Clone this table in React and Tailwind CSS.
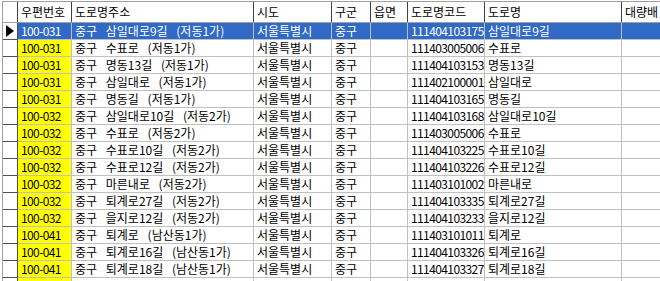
import React from "react";

const rows = [
  ["100-031", "중구 삼일대로9길 (저동1가)", "서울특별시", "중구", "", "111404103175", "삼일대로9길"],
  ["100-031", "중구 수표로 (저동1가)", "서울특별시", "중구", "", "111403005006", "수표로"],
  ["100-031", "중구 명동13길 (저동1가)", "서울특별시", "중구", "", "111404103153", "명동13길"],
  ["100-031", "중구 삼일대로 (저동1가)", "서울특별시", "중구", "", "111402100001", "삼일대로"],
  ["100-031", "중구 명동길 (저동1가)", "서울특별시", "중구", "", "111404103165", "명동길"],
  ["100-032", "중구 삼일대로10길 (저동2가)", "서울특별시", "중구", "", "111404103168", "삼일대로10길"],
  ["100-032", "중구 수표로 (저동2가)", "서울특별시", "중구", "", "111403005006", "수표로"],
  ["100-032", "중구 수표로10길 (저동2가)", "서울특별시", "중구", "", "111404103225", "수표로10길"],
  ["100-032", "중구 수표로12길 (저동2가)", "서울특별시", "중구", "", "111404103226", "수표로12길"],
  ["100-032", "중구 마른내로 (저동2가)", "서울특별시", "중구", "", "111403101002", "마른내로"],
  ["100-032", "중구 퇴계로27길 (저동2가)", "서울특별시", "중구", "", "111404103335", "퇴계로27길"],
  ["100-032", "중구 을지로12길 (저동2가)", "서울특별시", "중구", "", "111404103233", "을지로12길"],
  ["100-041", "중구 퇴계로 (남산동1가)", "서울특별시", "중구", "", "111403101011", "퇴계로"],
  ["100-041", "중구 퇴계로16길 (남산동1가)", "서울특별시", "중구", "", "111404103326", "퇴계로16길"],
  ["100-041", "중구 퇴계로18길 (남산동1가)", "서울특별시", "중구", "", "111404103327", "퇴계로18길"],
  ["", "", "", "", "", "", ""],
];

const widths = ["w-[54px]", "w-[182px]", "w-[78px]", "w-[39px]", "w-[37px]", "w-[77px]", "w-[137px]", "w-[100px]"];
const headers = ["우편번호", "도로명주소", "시도", "구군", "읍면", "도로명코드", "도로명", "대량배"];

export default function App() {
  return (
    <div
      className="w-[660px] h-[281px] overflow-hidden bg-white pl-[2px] pt-[1px] text-[12px] text-black"
      style={{ fontFamily: '"Noto Sans CJK KR", "Noto Sans", sans-serif' }}
    >
      <div className="border-l border-t border-[#a0a0a0] w-[720px]">
        {/* header */}
        <div className="flex h-[21px] border-b border-[#a0a0a0]">
          <div className="w-[15px] shrink-0 border-r border-[#404040] bg-white" />
          {headers.map((h, i) => (
            <div
              key={i}
              className={`${widths[i]} shrink-0 border-r border-[#404040] pl-[3px] leading-[20px] whitespace-nowrap overflow-hidden`}
            >
              {h}
            </div>
          ))}
        </div>
        {rows.map((r, ri) => {
          const sel = ri === 0;
          return (
            <div key={ri} className="flex h-[17px]">
              <div className="w-[15px] shrink-0 border-r border-b border-[#505050] bg-white flex items-center justify-center">
                {sel && (
                  <svg width="8" height="12" viewBox="0 0 8 12">
                    <polygon points="0,0 8,6 0,12" fill="#000" />
                  </svg>
                )}
              </div>
              {[...r, ""].map((c, ci) => {
                const bg = sel ? "bg-[#3169c6] text-white" : ci === 0 ? "bg-[#ffff00]" : "bg-white";
                const num = ci === 0 || ci === 5;
                return (
                  <div
                    key={ci}
                    className={`${widths[ci]} ${bg} ${num ? "tracking-[-0.6px]" : ""} ${ci === 1 ? "[word-spacing:6px]" : ""} shrink-0 border-r border-b border-[#c0c0c0] pl-[3px] leading-[16px] whitespace-pre overflow-hidden`}
                  >
                    {c}
                  </div>
                );
              })}
            </div>
          );
        })}
      </div>
    </div>
  );
}
